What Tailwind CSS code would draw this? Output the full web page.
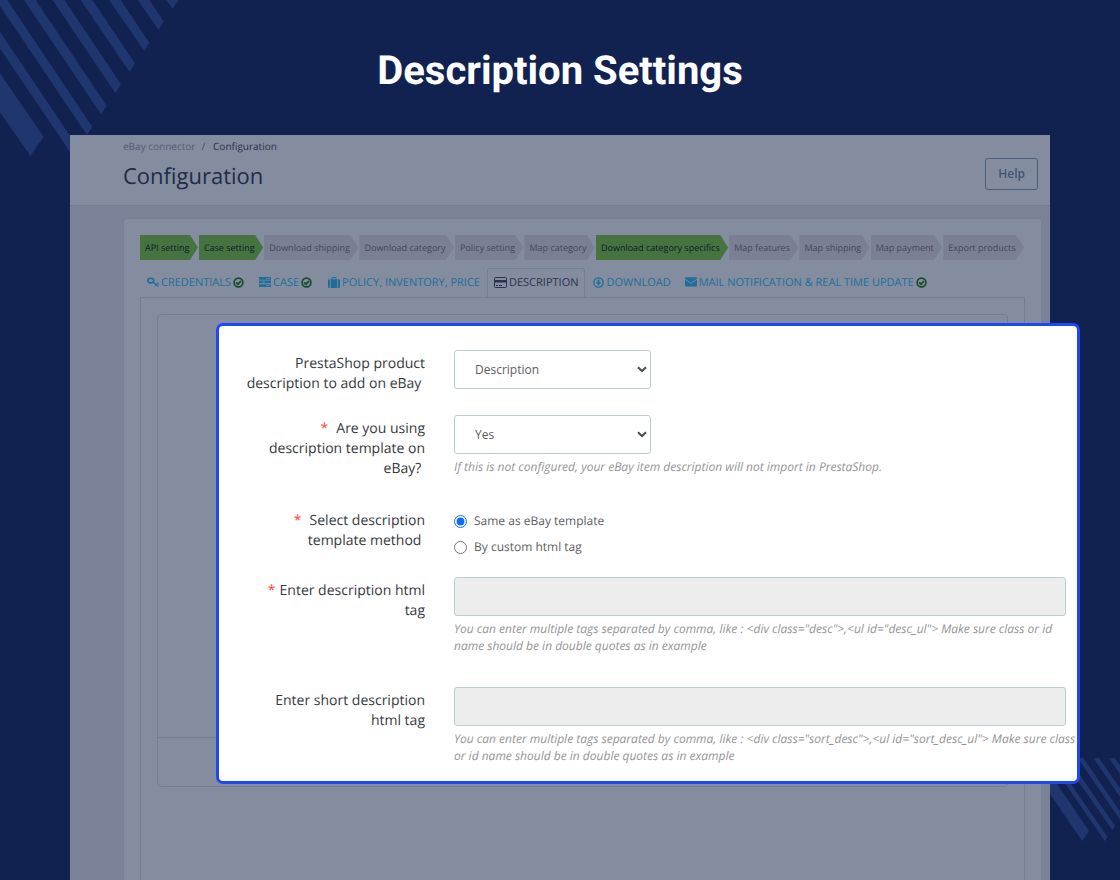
<!DOCTYPE html>
<html lang="en">
<head>
<meta charset="utf-8">
<meta name="viewport" content="width=device-width, initial-scale=1">
<title>Description Settings</title>
<script src="https://cdn.jsdelivr.net/npm/@tailwindcss/browser@4"></script>
</head>
<body class="relative flex min-h-screen flex-col overflow-x-hidden bg-[#112150] font-['Open_Sans',sans-serif] [text-rendering:geometricPrecision]">

<!-- decorative stripes -->
<svg class="absolute left-0 top-0" width="180" height="160" viewBox="0 0 540 480" fill="#20366f" aria-hidden="true">
  <path d="M-20 191L131 410L91 468L-20 308Z"/>
  <path d="M-64 0H-98L218 468L234 443Z"/>
  <path d="M22 0H-12L261 405L277 380Z"/>
  <path d="M107 0H72L303 343L320 317Z"/>
  <path d="M193 0H158L346 279L363 253Z"/>
  <path d="M277 0H242L389 216L405 190Z"/>
  <path d="M362 0H327L433 153L448 128Z"/>
  <path d="M448 0H413L476 90L491 64Z"/>
  <path d="M536 0H498L518 26Z"/>
</svg>
<svg class="absolute right-0 top-[758px]" width="120" height="84" viewBox="0 54 360 252" fill="#20366f" aria-hidden="true">
  <path d="M76 54H118L267 272L247 304Z"/>
  <path d="M142 54H159L322 290L315 304Z"/>
  <path d="M187 54H204L345 257L337 271Z"/>
  <path d="M233 54H250L380 244V268Z"/>
  <path d="M280 54H297L380 174V200Z"/>
  <path d="M327 54H344L380 106V131Z"/>
</svg>

<h1 class="pt-[47px] text-center font-['Roboto',sans-serif] text-[40px] leading-12 font-bold text-white">Description Settings</h1>

<main class="relative mx-[70px] mt-10 flex flex-1 flex-col bg-[#7a8297]">
  <header class="flex h-[71px] items-start justify-between border-b border-[#747d92] bg-[#848c9f] pl-[53px] pr-3">
    <div>
      <nav aria-label="Breadcrumb" class="flex gap-1.5 pt-[3px] text-[10px] leading-4">
        <a href="#" class="text-[#525d78]">eBay connector</a><span class="mr-0.5 text-[#3b4a62]">/</span><a href="#" class="text-[#27324e]">Configuration</a>
      </nav>
      <h2 class="pt-[7px] text-[22px] leading-[30px] text-[#202c48]">Configuration</h2>
    </div>
    <button type="button" class="mt-[23px] h-8 rounded-[3px] border border-[#4a5f80] px-3 text-xs font-semibold text-[#415374]">Help</button>
  </header>

  <section class="ml-[53px] mr-2 mt-3 flex flex-1 flex-col rounded-t border border-b-0 border-[#768096] bg-[#848c9f] px-4 pt-4">
    <ol class="flex text-[9px] leading-[25px] whitespace-nowrap text-[#3f4862] [&>li]:grow [&>li]:pl-[5px] [&>li]:pr-[9px] [&>li]:[clip-path:polygon(0_0,calc(100%-9px)_0,calc(100%-1px)_50%,calc(100%-9px)_100%,0_100%)]">
      <li class="bg-[#46733f] text-[#0d1c2e]">API setting</li>
      <li class="bg-[#46733f] text-[#0d1c2e]">Case setting</li>
      <li class="bg-[#7a7f94]">Download shipping</li>
      <li class="bg-[#7a7f94]">Download category</li>
      <li class="bg-[#7a7f94]">Policy setting</li>
      <li class="bg-[#7a7f94]">Map category</li>
      <li class="bg-[#46733f] text-[#0d1c2e]">Download category specifics</li>
      <li class="bg-[#7a7f94]">Map features</li>
      <li class="bg-[#7a7f94]">Map shipping</li>
      <li class="bg-[#7a7f94]">Map payment</li>
      <li class="bg-[#7a7f94]">Export products</li>
    </ol>

    <svg class="hidden" aria-hidden="true">
      <symbol id="ok" viewBox="0 0 12 12"><circle cx="6" cy="6" r="4.8" fill="none" stroke="#1a4a2c" stroke-width="1.8"/><path d="M3.4 5.8l2 2L8.7 4.4" fill="none" stroke="#1a4a2c" stroke-width="1.9"/></symbol>
    </svg>
    <nav aria-label="Settings" class="mt-2 flex h-[30px] text-[11px] whitespace-nowrap text-[#1e6e99] [&_svg]:mb-0.5 [&>a]:flex [&>a]:items-center [&>a]:gap-0.5 [&>a]:border [&>a]:px-1.5">
      <a href="#" class="border-transparent"><svg width="12" height="12" viewBox="0 0 12 12" fill="none" stroke="currentColor" aria-hidden="true"><ellipse cx="3.8" cy="4.6" rx="3" ry="2.3" stroke-width="1.6"/><path d="M6 6L11.2 10.6M8 9.4L9.4 7.9M10 6.6L11.6 8.2" stroke-width="1.3"/></svg>CREDENTIALS<svg width="11" height="11"><use href="#ok"/></svg></a>
      <a href="#" class="ml-px border-transparent"><svg width="12" height="10" viewBox="0 0 12 10" aria-hidden="true"><path fill="currentColor" d="M0 0h12v2.7H0zM0 3.6h12v2.7H0zM0 7.2h12v2.7H0z"/><path stroke="#848c9f" stroke-width=".8" d="M7 1.4h4M3 5h3M7 8.6h4"/></svg>CASE<svg width="11" height="11"><use href="#ok"/></svg></a>
      <a href="#" class="ml-0.5 border-transparent"><svg width="12" height="11" viewBox="0 0 12 11" fill="currentColor" aria-hidden="true"><path d="M0 3.4Q0 2.2 1.3 2.2h.6V11h-.6Q0 11 0 9.8zM2.7 2.2H3.5V.9q0-.9.9-.9h3.2q.9 0 .9.9v1.3h.8V11H2.7zM4.5 1v1.2h3V1zM10.1 2.2h.6q1.3 0 1.3 1.2v6.4Q12 11 10.7 11h-.6z"/></svg>POLICY, INVENTORY, PRICE</a>
      <a href="#" aria-current="page" class="rounded-t-[3px] border-[#747d92] border-b-[#848c9f] bg-[#848c9f] text-[#27324e]"><svg width="13" height="11" viewBox="0 0 13 11" aria-hidden="true"><rect x=".5" y=".5" width="12" height="10" rx="1" fill="none" stroke="currentColor"/><path fill="currentColor" d="M0 3h13v2.5H0zM2 8h2v1H2zM5 8h3v1H5z"/></svg>DESCRIPTION</a>
      <a href="#" class="ml-px border-transparent"><svg width="11" height="11" viewBox="0 0 12 12" aria-hidden="true"><circle cx="6" cy="6" r="5" fill="none" stroke="currentColor" stroke-width="1.5"/><path fill="currentColor" d="M5 2.8h2v3h2L6 9.2 3 5.8h2z"/></svg>DOWNLOAD</a>
      <a href="#" class="border-transparent"><svg width="12" height="10" viewBox="0 0 12 10" aria-hidden="true"><rect y=".3" width="12" height="9.2" rx="1" fill="currentColor"/><path d="M0 2.2L6 6.4L12 2.2" fill="none" stroke="#848c9f" stroke-width=".9"/></svg>MAIL NOTIFICATION &amp; REAL TIME UPDATE<svg width="11" height="11"><use href="#ok"/></svg></a>
    </nav>
    <div class="-mt-px flex-1 border border-b-0 border-[#747d92] px-4 pt-4">
      <div class="flex h-[473px] flex-col justify-end rounded border border-[#747d92]"><div class="h-[49px] border-t border-[#747d92]"></div></div>
    </div>
  </section>
</main>

<form class="absolute left-[216px] right-10 top-[323px] rounded-[7px] border-[3px] border-[#1f48f5] bg-white pb-[17px] pl-[19px] pr-[11px] pt-6 text-[#363a41]">
  <div class="grid grid-cols-[187px_1fr] gap-x-[29px] text-sm leading-5">
    <label for="source" class="mt-1 text-right">PrestaShop product<br>description to add on eBay&nbsp;</label>
    <div class="h-[65px]">
      <div class="relative w-[197px]">
        <select id="source" class="h-[39px] w-full appearance-none rounded-[3px] border border-[#bbcdd2] bg-white px-5 text-xs text-[#5d6063]"><option>Description</option><option>Short description</option></select>
        <svg class="pointer-events-none absolute right-1 top-4" width="10" height="7" viewBox="0 0 10 7" fill="none" stroke="#4a4c50" stroke-width="2" aria-hidden="true"><path d="M1 1.2L5 5L9 1.2"/></svg>
      </div>
    </div>

    <label for="use" class="mt-1 text-right"><span class="mr-2 text-[#f54c3e]">*</span>Are you using<br>description template on<br>eBay?&nbsp;</label>
    <div class="h-[93px]">
      <div class="relative w-[197px]">
        <select id="use" class="h-[39px] w-full appearance-none rounded-[3px] border border-[#bbcdd2] bg-white px-5 text-xs text-[#5d6063]"><option>Yes</option><option>No</option></select>
        <svg class="pointer-events-none absolute right-1 top-4" width="10" height="7" viewBox="0 0 10 7" fill="none" stroke="#4a4c50" stroke-width="2" aria-hidden="true"><path d="M1 1.2L5 5L9 1.2"/></svg>
      </div>
      <p class="mt-1 text-xs leading-[17px] text-[#959595] italic">If this is not configured, your eBay item description will not import in PrestaShop.</p>
    </div>

    <div id="method" class="mt-[3px] text-right"><span class="mr-2 text-[#f54c3e]">*</span>Select description<br>template method&nbsp;</div>
    <div role="radiogroup" aria-labelledby="method" class="flex h-[69px] flex-col gap-1.5 pt-[3px] text-xs leading-5 text-[#5d6063]">
      <label class="flex items-center gap-[7px]"><input type="radio" name="m" checked class="size-[13px] accent-[#0d6efd]">Same as eBay template</label>
      <label class="flex items-center gap-[7px]"><input type="radio" name="m" class="size-[13px]">By custom html tag</label>
    </div>

    <label for="tag" class="mt-1 text-right"><span class="mr-1 text-[#f54c3e]">*</span>Enter description html<br>tag</label>
    <div class="h-[110px]">
      <input id="tag" type="text" disabled class="block h-[39px] w-full rounded-[3px] border border-[#bbcdd2] bg-[#ededed] px-3">
      <p class="-mr-2.5 mt-1 text-xs leading-[17px] text-[#959595] italic">You can enter multiple tags separated by comma, like : &lt;div class="desc"&gt;,&lt;ul id="desc_ul"&gt; Make sure class or id name should be in double quotes as in example</p>
    </div>

    <label for="short" class="mt-1 text-right">Enter short description<br>html tag</label>
    <div>
      <input id="short" type="text" disabled class="block h-[39px] w-full rounded-[3px] border border-[#bbcdd2] bg-[#ededed] px-3">
      <p class="-mr-2.5 mt-1 text-xs leading-[17px] text-[#959595] italic">You can enter multiple tags separated by comma, like : &lt;div class="sort_desc"&gt;,&lt;ul id="sort_desc_ul"&gt; Make sure class or id name should be in double quotes as in example</p>
    </div>
  </div>
</form>
</body>
</html>
